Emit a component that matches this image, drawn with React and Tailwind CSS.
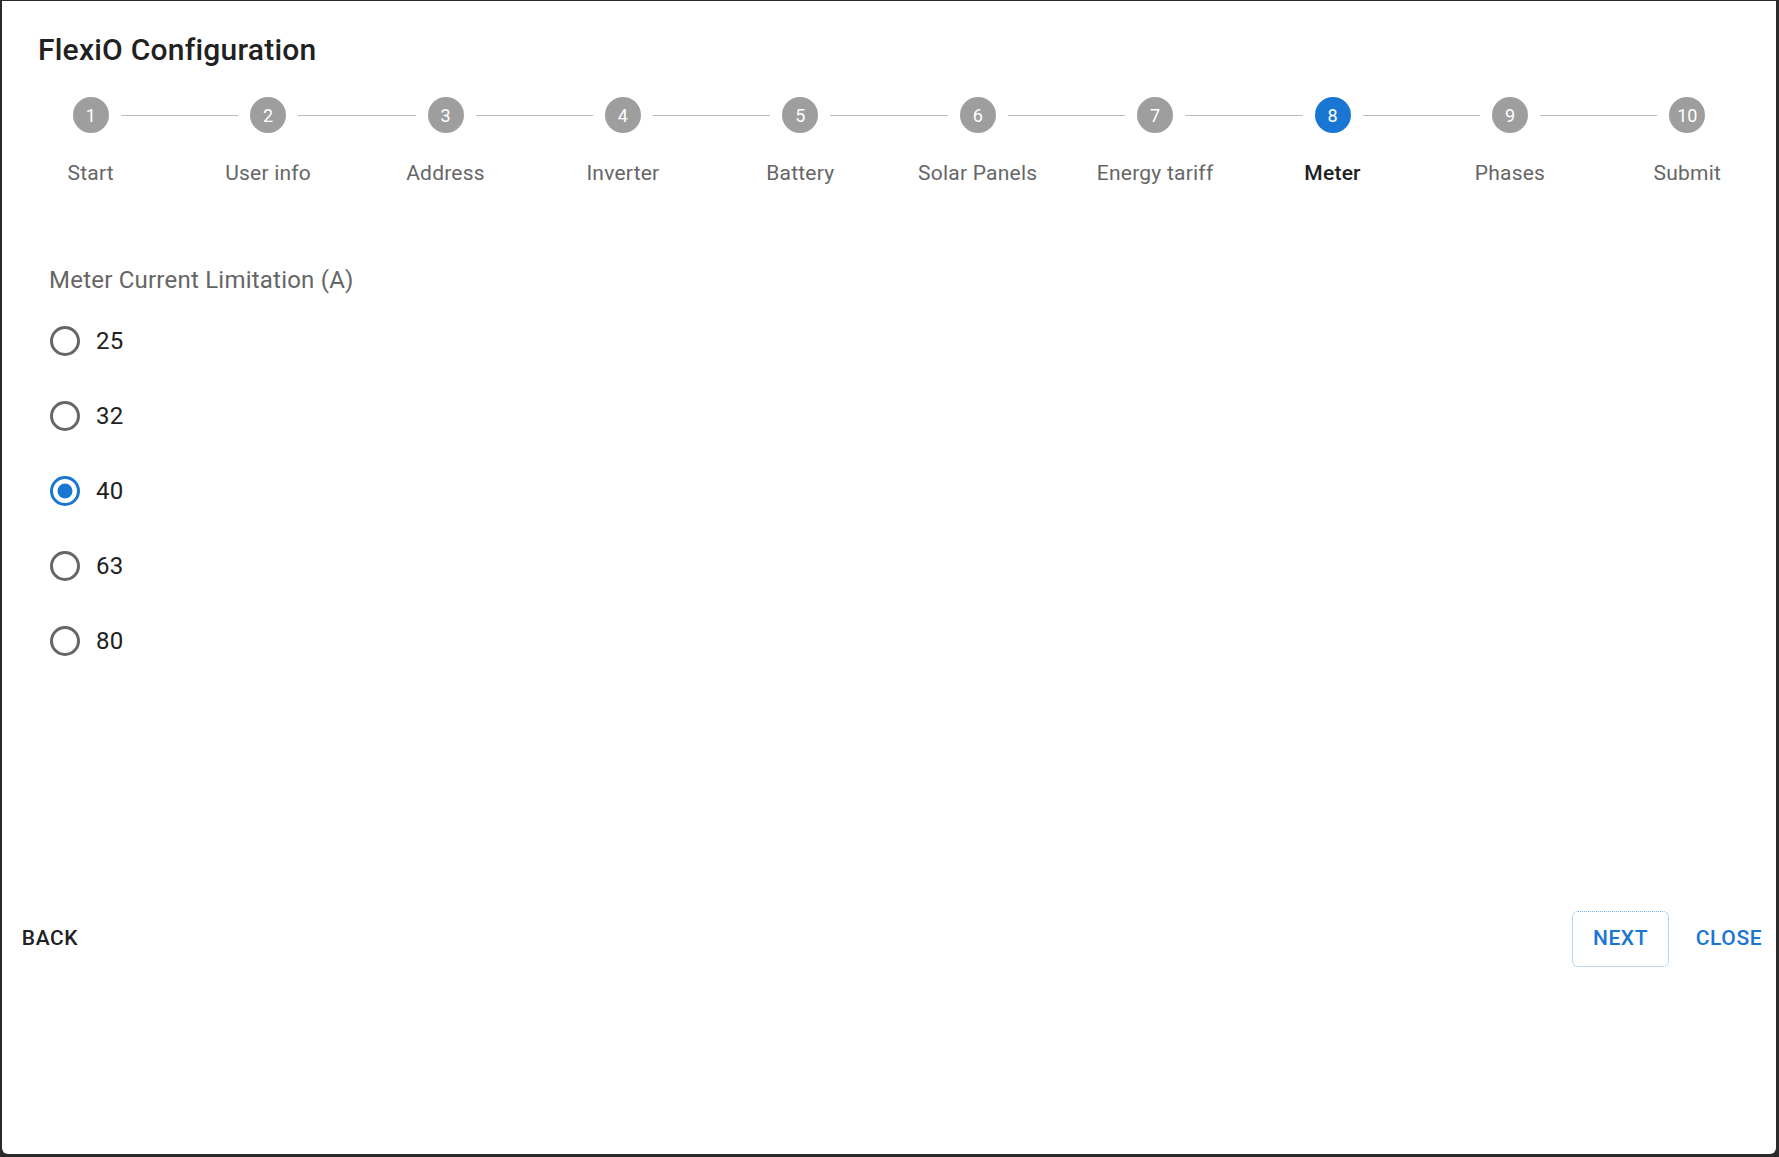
import { useState } from "react"

const steps = [
  "Start",
  "User info",
  "Address",
  "Inverter",
  "Battery",
  "Solar Panels",
  "Energy tariff",
  "Meter",
  "Phases",
  "Submit",
]

const options = ["25", "32", "40", "63", "80"]

function RadioIcon({ checked }) {
  const color = checked ? "#1976d2" : "#666666"
  return (
    <svg viewBox="0 0 24 24" className="h-[36px] w-[36px] shrink-0">
      <circle cx="12" cy="12" r="9" fill="none" stroke={color} strokeWidth="2" />
      {checked && <circle cx="12" cy="12" r="5" fill={color} />}
    </svg>
  )
}

export default function App() {
  const [value, setValue] = useState("40")
  const active = 7

  return (
    <div className="min-h-screen bg-[#2a2a2a] pt-px pl-[2px] pr-[3px] pb-[3px] font-['Roboto','Liberation_Sans',sans-serif]">
      <div className="flex h-[1153px] flex-col rounded-b-[6px] bg-white">
        <h2 className="px-[36px] pt-[25px] pb-[23px] text-[30px] font-medium leading-[48px] tracking-[0.225px] text-[#212121]">
          FlexiO Configuration
        </h2>

        <div className="flex">
          {steps.map((label, i) => (
            <div key={label} className="relative flex flex-1 flex-col items-center">
              {i > 0 && (
                <div className="absolute top-[18px] left-[calc(-50%+30px)] right-[calc(50%+30px)] h-px bg-[#bdbdbd]" />
              )}
              <div
                className={
                  "flex h-[36px] w-[36px] items-center justify-center rounded-full text-[18px] text-white " +
                  (i === active ? "bg-[#1976d2]" : "bg-[#9e9e9e]")
                }
              >
                {i + 1}
              </div>
              <div
                className={
                  "mt-[25px] text-[21px] leading-[30px] tracking-[0.225px] " +
                  (i === active ? "font-medium text-[#212121]" : "text-[#666666]")
                }
              >
                {label}
              </div>
            </div>
          ))}
        </div>

        <div className="pl-[45px] pt-[74px]">
          <div className="pl-[2px] text-[24px] leading-[36px] tracking-[0.225px] text-[#666666]">
            Meter Current Limitation (A)
          </div>
          <div className="mt-[5px] flex flex-col">
            {options.map((opt) => (
              <label
                key={opt}
                className="flex h-[75px] w-fit cursor-pointer items-center gap-[13px]"
                onClick={() => setValue(opt)}
              >
                <RadioIcon checked={value === opt} />
                <span className="text-[24px] leading-[36px] tracking-[0.225px] text-[#212121]">{opt}</span>
              </label>
            ))}
          </div>
        </div>

        <div className="mt-[233px] flex items-center">
          <button className="flex h-[56px] w-[96px] items-center justify-center text-[21px] font-medium uppercase tracking-[0.6px] text-[#212121]">
            Back
          </button>
          <div className="ml-auto flex items-center gap-[12px]">
            <button className="flex h-[56px] w-[97px] items-center justify-center rounded-[6px] border border-dotted border-[#1976d2]/60 text-[21px] font-medium uppercase tracking-[0.6px] text-[#1976d2]">
              Next
            </button>
            <button className="-mr-px flex h-[56px] w-[96px] items-center justify-center text-[21px] font-medium uppercase tracking-[0.6px] text-[#1976d2]">
              Close
            </button>
          </div>
        </div>
      </div>
    </div>
  )
}
